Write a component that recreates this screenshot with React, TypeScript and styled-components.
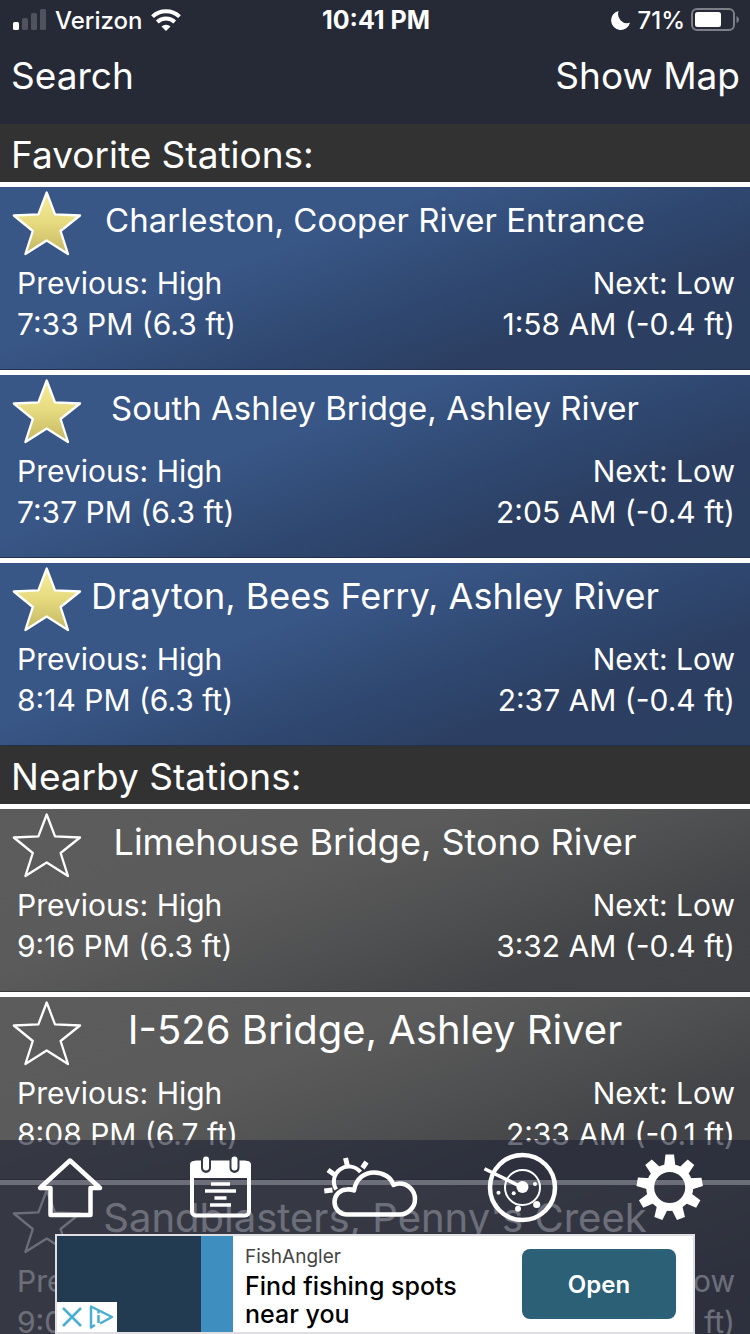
import React from 'react';
import styled, { createGlobalStyle } from 'styled-components';

const GlobalStyle = createGlobalStyle`
  * { box-sizing: border-box; }
  html, body { margin: 0; padding: 0; background: #262a36; }
  body { font-family: Inter, Roboto, "Liberation Sans", sans-serif; color: #fff; }
  button { font: inherit; color: inherit; background: none; border: 0; padding: 0; cursor: pointer; }
  h1, h2, h3, p { margin: 0; font-weight: 400; }
  svg { display: block; }
`;

const Screen = styled.div`
  height: 100vh;
  display: flex;
  flex-direction: column;
  overflow: hidden;
`;

const StatusBar = styled.div`
  display: grid;
  grid-template-columns: 1fr auto 1fr;
  align-items: center;
  height: 40px;
  padding: 0 10px 0 12px;
  font-size: 24px;
  font-weight: 500;
  white-space: nowrap;
`;

const StatusGroup = styled.div<{ $end?: boolean }>`
  display: flex;
  align-items: center;
  justify-content: ${(p) => (p.$end ? 'flex-end' : 'flex-start')};
  gap: ${(p) => (p.$end ? 6 : 9)}px;
`;

const Clock = styled.time`
  font-size: 25px;
  font-weight: 700;
`;

const Toolbar = styled.header`
  display: flex;
  justify-content: space-between;
  align-items: flex-start;
  height: 84px;
  flex: none;
  padding: 12px 10px 0 11px;
`;

const ToolbarButton = styled.button`
  && { font-size: 37px; line-height: 48px; }
`;

const List = styled.main`
  flex: 1;
  min-height: 0;
  overflow-y: auto;
  scrollbar-width: none;
  background: #323232;
`;

const SectionTitle = styled.h2`
  height: 58px;
  padding: 0 11px;
  background: #323232;
  font-size: 37px;
  line-height: 62px;
`;

const Card = styled.article<{ $favorite: boolean }>`
  height: 188px;
  border-top: 5px solid #fff;
  background: ${(p) =>
    p.$favorite
      ? 'linear-gradient(160deg, #385686 0%, #385686 36%, #2f476f 60%, #2c3f62 75%, #2b3f61 100%)'
      : 'linear-gradient(160deg, #5c5c5c 0%, #5b5b5b 36%, #4e4f50 60%, #434447 78%, #424346 100%)'};
  box-shadow: inset 0 -1px 0 ${(p) => (p.$favorite ? '#22304b' : '#38393c')};
`;

const CardHead = styled.div`
  display: grid;
  grid-template-columns: 70px 1fr 70px;
  align-items: start;
  height: 66px;
  padding: 0 12px;
`;

const StarButton = styled.button`
  padding-top: 3px;
`;

const StationName = styled.h3<{ $size: number }>`
  display: flex;
  justify-content: center;
  font-size: ${(p) => p.$size}px;
  line-height: 66px;
  white-space: nowrap;
`;

const Tides = styled.div`
  display: flex;
  justify-content: space-between;
  padding: 10px 15px 0 17px;
  font-size: 30px;
  line-height: 41px;
`;

const Tide = styled.p<{ $end?: boolean }>`
  text-align: ${(p) => (p.$end ? 'right' : 'left')};
`;

const Dock = styled.footer`
  position: fixed;
  left: 0;
  right: 0;
  bottom: 0;
  background: rgba(36, 41, 56, 0.67);
`;

const Nav = styled.nav`
  display: flex;
  justify-content: space-between;
  height: 94px;
  padding: 0 32px 0 22px;
`;

const Ad = styled.aside`
  display: flex;
  align-items: stretch;
  width: 640px;
  max-width: 100%;
  height: 100px;
  margin: 0 auto;
  border: 2px solid #dfdfe3;
  background: #fff;
  color: #000;
`;

const AdImage = styled.div`
  display: flex;
  align-items: flex-end;
  width: 176px;
  background: linear-gradient(90deg, #233b51 144px, #3f8ec0 144px);
`;

const AdBadges = styled.div`
  display: flex;
  align-items: center;
  justify-content: space-between;
  width: 60px;
  height: 30px;
  padding: 0 3px 0 5px;
  background: #fff;
`;

const AdText = styled.div`
  flex: 1;
  padding: 8px 0 0 12px;
`;

const AdBrand = styled.p`
  font-size: 19px;
  line-height: 26px;
  color: #444;
`;

const AdHeadline = styled.p`
  width: 240px;
  padding-top: 2px;
  font-size: 25px;
  font-weight: 500;
  line-height: 28px;
`;

const AdAction = styled.button`
  && {
    width: 154px;
    height: 70px;
    margin: 13px 17px 0 0;
    border-radius: 8px;
    background: #2b6077;
    color: #fff;
    font-size: 24px;
    font-weight: 600;
  }
`;

const Signal = () => (
  <svg width="34" height="24" viewBox="0 0 34 24" role="img" aria-label="Signal strength">
    <rect x="1" y="14" width="6" height="8" rx="1.5" fill="#fff" />
    <g fill="#50535e">
      <rect x="10" y="10" width="6" height="12" rx="1.5" />
      <rect x="19" y="5" width="6" height="17" rx="1.5" />
      <rect x="28" y="1" width="6" height="21" rx="1.5" />
    </g>
  </svg>
);

const Wifi = () => (
  <svg width="30" height="24" viewBox="0 0 30 24" role="img" aria-label="Wi-Fi">
    <g fill="none" stroke="#fff" strokeWidth="4">
      <path d="M1.500 8.600 A19.500 19.500 0 0 1 28.500 8.600" />
      <path d="M6.300 14 A12.500 12.500 0 0 1 23.700 14" />
    </g>
    <path d="M15 23 L10.500 18.400 A6.600 6.600 0 0 1 19.500 18.400 Z" fill="#fff" />
  </svg>
);

const Moon = () => (
  <svg width="20" height="20" viewBox="0 0 20 20" role="img" aria-label="Do not disturb">
    <path d="M7.600 1 A9.600 9.600 0 1 0 19 12.800 A9.200 9.200 0 0 1 7.600 1 Z" fill="#fff" />
  </svg>
);

const Battery = () => (
  <svg width="49" height="24" viewBox="0 0 49 24" role="img" aria-label="Battery 71%">
    <rect x="1" y="1" width="42" height="21" rx="5" fill="none" stroke="#7c7f86" strokeWidth="2" />
    <rect x="4" y="4" width="26" height="15" rx="2.5" fill="#fff" />
    <path d="M45.500 8 Q48 9 48 11.500 Q48 14 45.500 15 Z" fill="#7c7f86" />
  </svg>
);

const starPath =
  'M34.700 2.500 L43 24.300 L68 25.500 L48.600 41 L56 64 L34.700 50.500 L13.400 64 L20.800 41 L1.800 25.500 L26.400 24.300 Z';

const Star = ({ filled }: { filled: boolean }) => (
  <svg width="70" height="68" viewBox="0 0 70 68" aria-hidden="true">
    <defs>
      <linearGradient id="gold" x1="0" y1="0" x2="0" y2="1">
        <stop offset="0" stopColor="#f6ee9c" />
        <stop offset="0.5" stopColor="#e6da7f" />
        <stop offset="1" stopColor="#c3b662" />
      </linearGradient>
    </defs>
    <path
      d={starPath}
      fill={filled ? 'url(#gold)' : 'none'}
      stroke="#fff"
      strokeWidth="2.300"
      strokeLinejoin="round"
    />
  </svg>
);

const NavIcon = ({ label, children }: { label: string; children: React.ReactNode }) => (
  <button type="button" aria-label={label}>
    <svg width="96" height="94" viewBox="0 0 96 94" fill="none" stroke="#fff" strokeWidth="4">
      {children}
    </svg>
  </button>
);

const HomeIcon = () => (
  <NavIcon label="Home">
    <path d="M48 20.500 L18 48 H28.500 V75 H68.500 V48 H78 Z" strokeWidth="4.500" strokeLinejoin="round" />
  </NavIcon>
);

const CalendarIcon = () => (
  <NavIcon label="Calendar">
    <rect x="20" y="22.500" width="57" height="53" rx="4" />
    <path d="M18 38 V25 Q18 21 22 21 H75 Q79 21 79 25 V38 Z" fill="#fff" stroke="none" />
    <g strokeLinecap="round">
      <path d="M34 19 V28 M62.500 19 V28" stroke="#343946" strokeWidth="10" />
      <path d="M34 19.500 V27.500 M62.500 19.500 V27.500" strokeWidth="6" />
    </g>
    <path d="M39 44 H58 M33 51 H64 M42.500 58 H54.500 M38 65 H59" strokeWidth="3.500" />
  </NavIcon>
);

const WeatherIcon = () => (
  <NavIcon label="Weather">
    <path
      d="M25 74.500 A12.500 12.500 0 0 1 25 49.500 Q29 49 32 50.500 C34 38 43 32.500 52 32.500 C61 32.500 69 37 71.500 45 Q75 43.500 77.500 43.500 A15.500 15.500 0 0 1 77.500 74.500 Z"
      strokeWidth="4.500"
      strokeLinejoin="round"
    />
    <path d="M14.200 49.500 A15 15 0 0 1 38.500 32" />
    <path d="M23.500 18 L25.300 25.500 M44.500 22 L40.500 28 M6 30 L13 35 M2.300 51 L10.500 50" strokeWidth="5" />
  </NavIcon>
);

const RadarIcon = () => (
  <NavIcon label="Radar">
    <circle cx="50.500" cy="47.500" r="32.500" strokeWidth="4.500" />
    <circle cx="50.500" cy="47.500" r="17.500" strokeWidth="2" />
    <path d="M12.500 28.700 L50.500 47.500" strokeWidth="3.500" />
    <g fill="#fff" stroke="none">
      <circle cx="50.500" cy="47" r="6" />
      <circle cx="63" cy="44" r="2" />
      <circle cx="41.700" cy="53.300" r="2" />
      <circle cx="26.500" cy="52.700" r="2" />
      <circle cx="46" cy="68.700" r="3" />
      <circle cx="64.700" cy="64.500" r="3.600" />
    </g>
  </NavIcon>
);

const SettingsIcon = () => (
  <NavIcon label="Settings">
    <circle cx="47.700" cy="47.500" r="19.500" strokeWidth="8" />
    <g fill="#fff" stroke="none">
      {Array.from({ length: 9 }, (_, i) => (
        <path
          key={i}
          d="M42 27 L43.500 14.500 H52 L53.500 27 Z"
          transform={`rotate(${i * 40} 47.700 47.500)`}
        />
      ))}
    </g>
  </NavIcon>
);

type Station = { name: string; size: number; previous: string; next: string };

const favorites: Station[] = [
  { name: 'Charleston, Cooper River Entrance', size: 33, previous: '7:33 PM (6.3 ft)', next: '1:58 AM (-0.4 ft)' },
  { name: 'South Ashley Bridge, Ashley River', size: 33, previous: '7:37 PM (6.3 ft)', next: '2:05 AM (-0.4 ft)' },
  { name: 'Drayton, Bees Ferry, Ashley River', size: 36, previous: '8:14 PM (6.3 ft)', next: '2:37 AM (-0.4 ft)' },
];

const nearby: Station[] = [
  { name: 'Limehouse Bridge, Stono River', size: 36, previous: '9:16 PM (6.3 ft)', next: '3:32 AM (-0.4 ft)' },
  { name: 'I-526 Bridge, Ashley River', size: 40, previous: '8:08 PM (6.7 ft)', next: '2:33 AM (-0.1 ft)' },
  { name: "Sandblasters, Penny's Creek", size: 40, previous: '9:01 PM (6.3 ft)', next: '3:20 AM (-0.4 ft)' },
];

const StationCard = ({ station, favorite }: { station: Station; favorite: boolean }) => (
  <Card $favorite={favorite}>
    <CardHead>
      <StarButton type="button" aria-pressed={favorite} aria-label={`Favorite ${station.name}`}>
        <Star filled={favorite} />
      </StarButton>
      <StationName $size={station.size}>{station.name}</StationName>
    </CardHead>
    <Tides>
      <Tide>
        Previous: High
        <br />
        {station.previous}
      </Tide>
      <Tide $end>
        Next: Low
        <br />
        {station.next}
      </Tide>
    </Tides>
  </Card>
);

export default function App() {
  return (
    <Screen>
      <GlobalStyle />
      <StatusBar>
        <StatusGroup>
          <Signal />
          <span>Verizon</span>
          <Wifi />
        </StatusGroup>
        <Clock>10:41 PM</Clock>
        <StatusGroup $end>
          <Moon />
          <span>71%</span>
          <Battery />
        </StatusGroup>
      </StatusBar>
      <Toolbar>
        <ToolbarButton type="button">Search</ToolbarButton>
        <ToolbarButton type="button">Show Map</ToolbarButton>
      </Toolbar>
      <List>
        <SectionTitle>Favorite Stations:</SectionTitle>
        {favorites.map((s) => (
          <StationCard key={s.name} station={s} favorite />
        ))}
        <SectionTitle>Nearby Stations:</SectionTitle>
        {nearby.map((s) => (
          <StationCard key={s.name} station={s} favorite={false} />
        ))}
      </List>
      <Dock>
        <Nav>
          <HomeIcon />
          <CalendarIcon />
          <WeatherIcon />
          <RadarIcon />
          <SettingsIcon />
        </Nav>
        <Ad>
          <AdImage>
            <AdBadges>
              <svg width="20" height="20" viewBox="0 0 20 20" fill="none" stroke="#4aaed0" strokeWidth="2.500">
                <path d="M1 1 L19 19 M19 1 L1 19" />
              </svg>
              <svg width="26" height="24" viewBox="0 0 26 24" fill="none" stroke="#4aaed0" strokeWidth="2.500">
                <path d="M7 20 L3 22.500 V1.500 L24 12 L12 18.500" strokeLinejoin="round" />
                <path d="M10.500 10 V18 M10.500 6 V8.500" />
              </svg>
            </AdBadges>
          </AdImage>
          <AdText>
            <AdBrand>FishAngler</AdBrand>
            <AdHeadline>Find fishing spots near you</AdHeadline>
          </AdText>
          <AdAction type="button">Open</AdAction>
        </Ad>
      </Dock>
    </Screen>
  );
}
